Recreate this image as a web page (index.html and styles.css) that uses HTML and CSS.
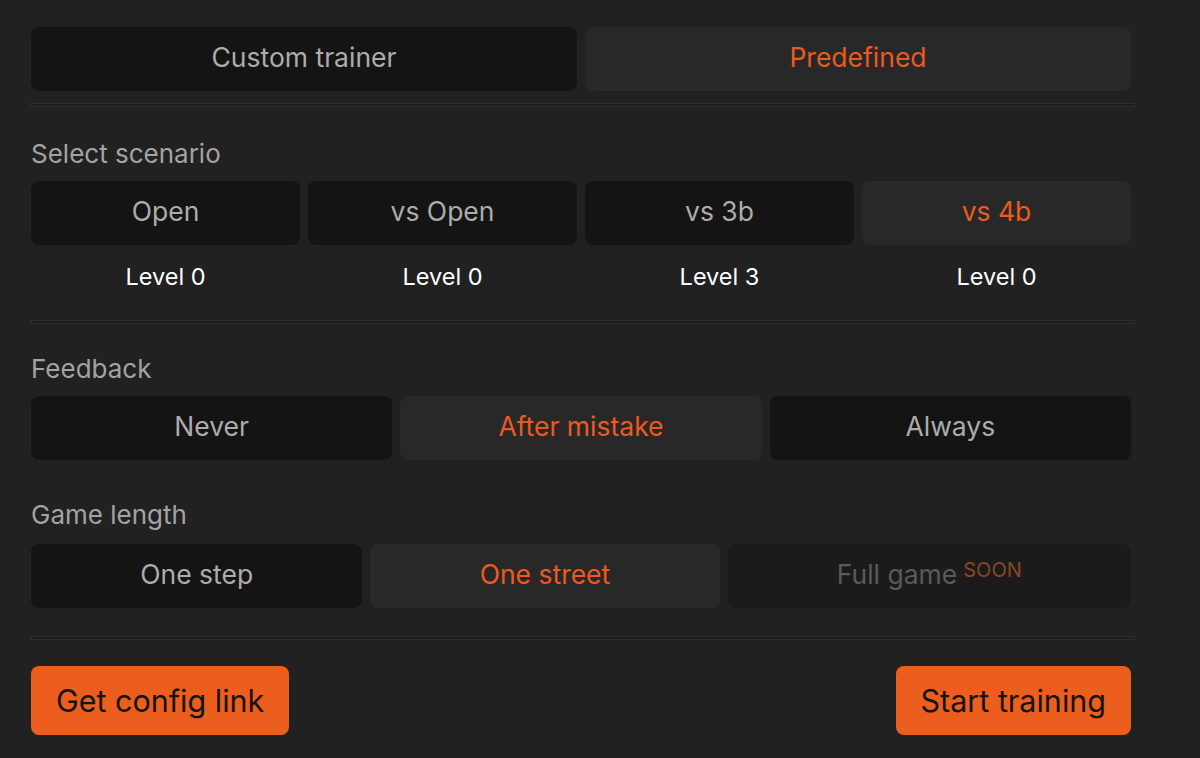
FILE: index.html
```html
<!DOCTYPE html>
<html lang="en">

<head>
    <meta charset="UTF-8">
    <meta name="viewport" content="width=device-width, initial-scale=1.0">
    <title>Trainer setup</title>
    <link rel="stylesheet" href="styles.css">
</head>

<body>
    <div class="panel">
        <div class="tabs">
            <button class="opt">Custom trainer</button>
            <button class="opt active">Predefined</button>
        </div>

        <hr class="divider">

        <!-- Scenario -->
        <div class="label label-first">Select scenario</div>
        <div class="scenarios">
            <button class="opt">Open</button>
            <button class="opt">vs Open</button>
            <button class="opt">vs 3b</button>
            <button class="opt active">vs 4b</button>
        </div>
        <div class="levels">
            <span>Level 0</span>
            <span>Level 0</span>
            <span>Level 3</span>
            <span>Level 0</span>
        </div>

        <hr class="divider divider-levels">

        <!-- Feedback -->
        <div class="label label-feedback">Feedback</div>
        <div class="feedback">
            <button class="opt">Never</button>
            <button class="opt active">After mistake</button>
            <button class="opt">Always</button>
        </div>

        <!-- Game length -->
        <div class="label label-length">Game length</div>
        <div class="length">
            <button class="opt">One step</button>
            <button class="opt active">One street</button>
            <button class="opt disabled" disabled>Full game <sup>SOON</sup></button>
        </div>

        <hr class="divider divider-length">

        <div class="actions">
            <button class="action">Get config link</button>
            <button class="action">Start training</button>
        </div>
    </div>
</body>

</html>
```

FILE: styles.css
```css
body {
    margin: 0;
    background: #212121;
    font-family: 'Inter', 'Noto Sans', sans-serif;
    color: #a3a3a3;
}

.panel {
    width: 1100px;
    padding: 27px 0 0 31px;
}

.opt {
    height: 64px;
    border: none;
    border-radius: 8px;
    background: #141414;
    color: #acacac;
    font-family: inherit;
    font-size: 26.5px;
    display: flex;
    justify-content: center;
    align-items: center;
    padding: 0 16px 5px;
    cursor: pointer;
}

.opt.active {
    background: #282828;
    color: #ec5a22;
}

.opt.disabled {
    background: #1b1b1b;
    color: #5a5a5a;
    cursor: default;
}

.opt sup {
    font-size: 20px;
    color: #8c4623;
    margin-left: 6px;
    position: relative;
    top: -4px;
}

.tabs {
    display: grid;
    grid-template-columns: 1fr 1fr;
    gap: 8px;
}

.divider {
    width: 1102px;
    height: 2px;
    margin: 12px 0 0;
    border: 1px solid #2e2e2e;
    background: #1d1d1d;
    box-sizing: content-box;
    padding: 0;
}

.label {
    font-size: 26px;
    line-height: 30px;
    margin-bottom: 12px;
}

.label-first {
    margin-top: 32px;
}

.scenarios {
    display: grid;
    grid-template-columns: repeat(4, 1fr);
    gap: 8px;
}

.levels {
    display: grid;
    grid-template-columns: repeat(4, 1fr);
    gap: 8px;
    margin-top: 17px;
    font-size: 23.5px;
    line-height: 30px;
    color: #ffffff;
    text-align: center;
}

.divider-levels {
    margin-top: 28px;
}

.label-feedback {
    margin-top: 30px;
}

.feedback {
    display: grid;
    grid-template-columns: repeat(3, 1fr);
    gap: 8px;
}

.label-length {
    margin-top: 40px;
    margin-bottom: 14px;
}

.length {
    display: flex;
    gap: 8px;
}

.length .opt {
    flex: 1 1 auto;
}

.divider-length {
    margin-top: 28px;
}

.actions {
    display: flex;
    justify-content: space-between;
    margin-top: 26px;
}

.action {
    height: 69px;
    padding: 0 25px;
    border: none;
    border-radius: 8px;
    background: #eb5e1e;
    color: #141414;
    font-family: inherit;
    font-size: 30.5px;
    cursor: pointer;
}
```
